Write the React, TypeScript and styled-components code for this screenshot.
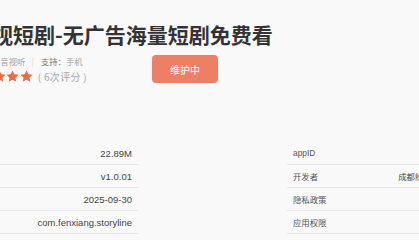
import React from 'react'
import styled, { createGlobalStyle } from 'styled-components'

const GlobalStyle = createGlobalStyle`
html, body {
  margin: 0;
  padding: 0;
  background: #f9f9f9;
  overflow: hidden;
}
body {
  font-family: "Liberation Sans", "Noto Sans CJK SC", sans-serif;
}
`

const leftRows = [
    { label: '大小', value: '22.89M' },
    { label: '版本', value: 'v1.0.01' },
    { label: '更新时间', value: '2025-09-30' },
    { label: '包名', value: 'com.fenxiang.storyline' },
]

const rightRows = [
    { label: 'appID', value: '' },
    { label: '开发者', value: '成都纷享科技有限公司' },
    { label: '隐私政策', value: '查看' },
    { label: '应用权限', value: '查看' },
]

const Star = () => (
    <svg width="13" height="13" viewBox="0 0 24 24">
        <path
            d="M12 0.8l3.4 7 7.7 1-5.6 5.3 1.5 7.6L12 18l-7 3.7 1.5-7.6L0.9 8.8l7.7-1z"
            fill="#f26a43"
        />
    </svg>
)

const App = () => {
    return (
        <Page>
            <GlobalStyle />
            <Head>
                <Title>视短剧-无广告海量短剧免费看</Title>
                <InfoRow>
                    <MetaCol>
                        <MetaLine>
                            影音视听
                            <Sep>|</Sep>
                            <MetaKey>支持：</MetaKey>
                            手机
                        </MetaLine>
                        <RatingLine>
                            <Stars>
                                <Star />
                                <Star />
                                <Star />
                            </Stars>
                            <Count>( 6次评分 )</Count>
                        </RatingLine>
                    </MetaCol>
                    <StatusButton>维护中</StatusButton>
                </InfoRow>
            </Head>

            <DetailGrid>
                <DetailTable>
                    {leftRows.map((r) => (
                        <Row key={r.label}>
                            <Label>{r.label}</Label>
                            <Value>{r.value}</Value>
                        </Row>
                    ))}
                </DetailTable>
                <DetailTable>
                    {rightRows.map((r) => (
                        <Row key={r.label}>
                            <Label>{r.label}</Label>
                            <Value cjk>{r.value}</Value>
                        </Row>
                    ))}
                </DetailTable>
            </DetailGrid>
        </Page>
    )
}

export default App

const Page = styled.div`
width: 419px;
height: 240px;
overflow: hidden;
`

const Head = styled.div`
margin-left: -8px;
padding-top: 20px;
`

const Title = styled.h1`
margin: 0 0 6px;
font-family: "Noto Sans CJK SC", sans-serif;
font-size: 21px;
line-height: 28px;
font-weight: 700;
color: #333;
white-space: nowrap;
`

const InfoRow = styled.div`
display: flex;
align-items: center;
`

const MetaCol = styled.div`
width: 160px;
display: flex;
flex-direction: column;
`

const MetaLine = styled.div`
font-family: "Noto Sans CJK SC", sans-serif;
font-size: 8.4px;
line-height: 14px;
color: #a3a3a3;
white-space: nowrap;
display: flex;
align-items: center;
`

const Sep = styled.span`
color: #d4d4d4;
margin: 0 7px 0 6px;
`

const MetaKey = styled.span`
color: #777;
`

const RatingLine = styled.div`
display: flex;
align-items: center;
height: 16px;
margin-left: 1px;
`

const Stars = styled.div`
display: flex;
gap: 0.4px;
margin-right: 5px;
`

const Count = styled.span`
font-family: "Noto Sans CJK SC", sans-serif;
font-size: 10px;
letter-spacing: 0.3px;
color: #a8a8a8;
white-space: nowrap;
`

const StatusButton = styled.button`
width: 66px;
height: 28px;
border: 0;
border-radius: 4px;
background: #ec7f66;
color: #fff;
font-family: "Noto Sans CJK SC", sans-serif;
font-size: 10px;
padding: 0;
cursor: pointer;
`

const DetailGrid = styled.div`
display: grid;
grid-template-columns: 201px 201px;
column-gap: 149px;
margin-top: 58px;
margin-left: -63px;
`

const DetailTable = styled.div`
display: flex;
flex-direction: column;
`

const Row = styled.div`
height: 22px;
padding: 0 6px;
display: flex;
align-items: center;
justify-content: space-between;
border-bottom: 1px solid #e6e6e6;
`

const Label = styled.span`
font-family: "Liberation Sans", "Noto Sans CJK SC", sans-serif;
font-size: 8.4px;
color: #555;
white-space: nowrap;
`

const Value = styled.span<{ cjk?: boolean }>`
font-family: "Liberation Sans", "Noto Sans CJK SC", sans-serif;
font-size: ${({ cjk }) => cjk ? '8.4px' : '9.5px'};
color: #444;
white-space: nowrap;
`
